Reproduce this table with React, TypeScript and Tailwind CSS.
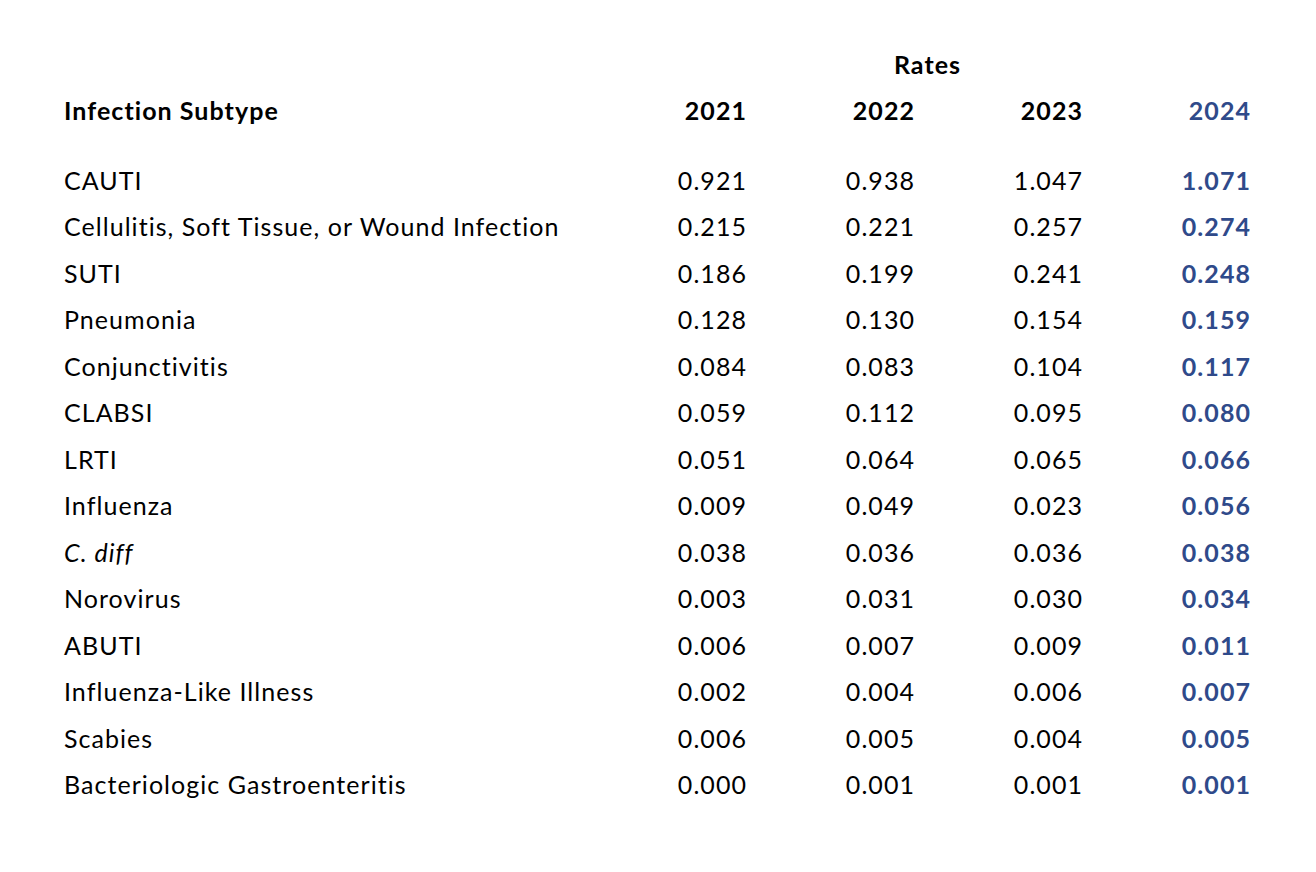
import React from "react";

const rows: [React.ReactNode, string, string, string, string][] = [
  ["CAUTI", "0.921", "0.938", "1.047", "1.071"],
  ["Cellulitis, Soft Tissue, or Wound Infection", "0.215", "0.221", "0.257", "0.274"],
  ["SUTI", "0.186", "0.199", "0.241", "0.248"],
  ["Pneumonia", "0.128", "0.130", "0.154", "0.159"],
  ["Conjunctivitis", "0.084", "0.083", "0.104", "0.117"],
  ["CLABSI", "0.059", "0.112", "0.095", "0.080"],
  ["LRTI", "0.051", "0.064", "0.065", "0.066"],
  ["Influenza", "0.009", "0.049", "0.023", "0.056"],
  [<i key="cdiff">C. diff</i>, "0.038", "0.036", "0.036", "0.038"],
  ["Norovirus", "0.003", "0.031", "0.030", "0.034"],
  ["ABUTI", "0.006", "0.007", "0.009", "0.011"],
  ["Influenza-Like Illness", "0.002", "0.004", "0.006", "0.007"],
  ["Scabies", "0.006", "0.005", "0.004", "0.005"],
  ["Bacteriologic Gastroenteritis", "0.000", "0.001", "0.001", "0.001"],
];

const App = () => {
  return (
    <div className="w-[1316px] h-[872px] bg-white text-black pl-[64px] pt-[41px] font-['Lato','Liberation_Sans',sans-serif] text-[25px] tracking-[1.05px]">
      <div className="grid grid-cols-[514px_168px_168px_168px_168px]">
        <div className="h-[46px]" />
        <div className="col-span-4 h-[46px] leading-[46px] text-center font-bold pl-[27px]">
          Rates
        </div>

        <div className="h-[46px] leading-[46px] font-bold">Infection Subtype</div>
        <div className="h-[46px] leading-[46px] font-bold text-right -mr-[1px]">2021</div>
        <div className="h-[46px] leading-[46px] font-bold text-right -mr-[1px]">2022</div>
        <div className="h-[46px] leading-[46px] font-bold text-right -mr-[1px]">2023</div>
        <div className="h-[46px] leading-[46px] font-bold text-right -mr-[1px] text-[#2f4a8a]">2024</div>

        <div className="col-span-5 h-[23.5px]" />

        {rows.map((r, i) => (
          <React.Fragment key={i}>
            <div className="h-[46.5px] leading-[46.5px] whitespace-nowrap">{r[0]}</div>
            <div className="h-[46.5px] leading-[46.5px] text-right -mr-[1px]">{r[1]}</div>
            <div className="h-[46.5px] leading-[46.5px] text-right -mr-[1px]">{r[2]}</div>
            <div className="h-[46.5px] leading-[46.5px] text-right -mr-[1px]">{r[3]}</div>
            <div className="h-[46.5px] leading-[46.5px] text-right -mr-[1px] font-bold text-[#2f4a8a]">{r[4]}</div>
          </React.Fragment>
        ))}
      </div>
    </div>
  );
};

export default App;
